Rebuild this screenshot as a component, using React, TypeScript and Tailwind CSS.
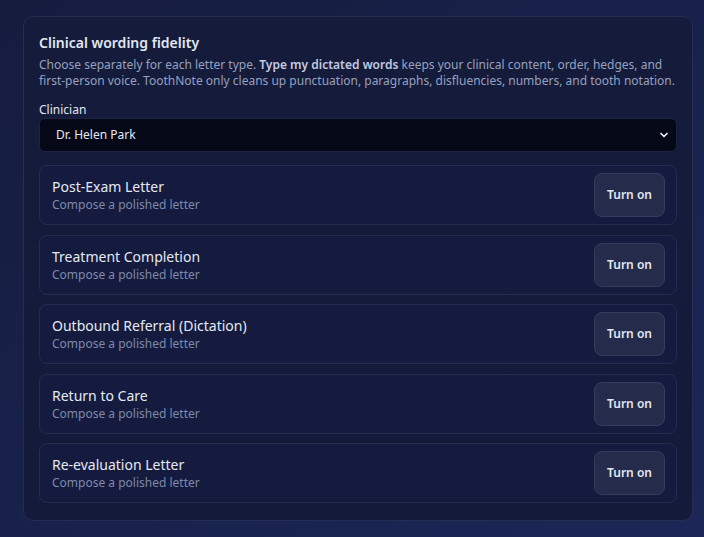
import React from 'react';

const letterTypes = [
  'Post-Exam Letter',
  'Treatment Completion',
  'Outbound Referral (Dictation)',
  'Return to Care',
  'Re-evaluation Letter',
];

const LetterRow: React.FC<{ title: string }> = ({ title }) => (
  <div className="flex items-center justify-between h-[60px] pl-3 pr-[11px] rounded-lg border border-[#242c50] bg-[#141b3e]">
    <div className="flex flex-col">
      <span className="text-[14px] leading-[20px] text-[#e5e9f3]">{title}</span>
      <span className="text-[12px] leading-[16px] text-[#7f89ab]">Compose a polished letter</span>
    </div>
    <button className="h-[44px] w-[71px] rounded-lg border border-[#353c5d] bg-[#252c4b] text-[12px] font-semibold text-[#e2e6f0]">
      Turn on
    </button>
  </div>
);

export default function App() {
  return (
    <div
      className="min-h-[537px] w-[704px] pt-[16px] pl-[23px] bg-gradient-to-br from-[#151c3e] via-[#18214b] to-[#1c2757]"
      style={{ fontFamily: '"Noto Sans", "Open Sans", sans-serif' }}
    >
      <div className="w-[670px] rounded-[10px] border border-[#252d52] bg-gradient-to-b from-[#141b3b] to-[#131a3a] pt-4 pb-[17px] px-[15px]">
        <h2 className="text-[14px] leading-[20px] font-semibold text-[#e2e7f2]">Clinical wording fidelity</h2>
        <p className="mt-1 text-[12px] leading-[16px] text-[#97a1bf]">
          Choose separately for each letter type. <strong className="font-semibold text-[#c3cbe2]">Type my dictated words</strong> keeps
          your clinical content, order, hedges, and first-person voice. ToothNote only cleans up punctuation, paragraphs,
          disfluencies, numbers, and tooth notation.
        </p>
        <label className="mt-[13px] block text-[12px] leading-[16px] text-[#e2e7f2]">Clinician</label>
        <div className="flex h-[34px] items-center justify-between rounded-md border border-[#1d2443] bg-[#050817] pl-4 pr-[6px]">
          <span className="text-[12px] text-[#e5e9f3]">Dr. Helen Park</span>
          <svg width="12" height="12" viewBox="0 0 24 24" fill="none" stroke="#e5e9f3" strokeWidth="3.5" strokeLinecap="round" strokeLinejoin="round">
            <path d="M6 9l6 6 6-6" />
          </svg>
        </div>
        <div className="mt-[13px] flex flex-col gap-[9.5px]">
          {letterTypes.map((t) => (
            <LetterRow key={t} title={t} />
          ))}
        </div>
      </div>
    </div>
  );
}
